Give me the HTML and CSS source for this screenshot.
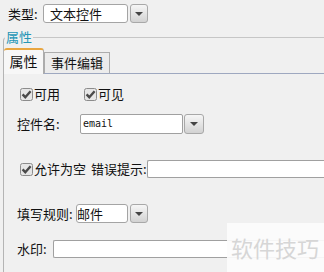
FILE: index.html
```html
<!DOCTYPE html>
<html>
<head>
<meta charset="UTF-8">
<title>控件属性</title>
<link rel="stylesheet" href="styles.css">
</head>
<body>

<div class="type-row">
    <span class="label type-label">类型:</span>
    <div class="combo-box type-combo">文本控件</div>
    <div class="combo-btn"><span class="arrow"></span></div>
</div>

<fieldset class="group">
    <legend>属性</legend>
    <div class="tabs">
        <div class="tab tab-active">属性</div>
        <div class="tab">事件编辑</div>
    </div>
    <div class="panel">
        <div class="row check-row">
            <label class="check check-first">
                <svg width="13" height="13" viewBox="0 0 13 13"><rect x="0.5" y="0.5" width="12" height="12" rx="2" fill="#e6e6e6" stroke="#8c8c8c"/><path d="M2.6 6.4 L5.3 9.2 L10.6 3.2" fill="none" stroke="#4a4a4a" stroke-width="2.4"/></svg>
                可用
            </label>
            <label class="check">
                <svg width="13" height="13" viewBox="0 0 13 13"><rect x="0.5" y="0.5" width="12" height="12" rx="2" fill="#e6e6e6" stroke="#8c8c8c"/><path d="M2.6 6.4 L5.3 9.2 L10.6 3.2" fill="none" stroke="#4a4a4a" stroke-width="2.4"/></svg>
                可见
            </label>
        </div>

        <div class="row name-row">
            <span class="label name-label">控件名:</span>
            <div class="input name-input">email</div>
            <div class="combo-btn name-btn"><span class="arrow"></span></div>
        </div>

        <div class="row allow-row">
            <label class="check">
                <svg width="13" height="13" viewBox="0 0 13 13"><rect x="0.5" y="0.5" width="12" height="12" rx="2" fill="#e6e6e6" stroke="#8c8c8c"/><path d="M2.6 6.4 L5.3 9.2 L10.6 3.2" fill="none" stroke="#4a4a4a" stroke-width="2.4"/></svg>
                允许为空
            </label>
            <span class="label error-label">错误提示:</span>
            <div class="input wide-input"></div>
        </div>

        <div class="row rule-row">
            <span class="label rule-label">填写规则:</span>
            <div class="combo-box rule-combo">邮件</div>
            <div class="combo-btn"><span class="arrow"></span></div>
        </div>

        <div class="row mark-row">
            <span class="label mark-label">水印:</span>
            <div class="input wide-input"></div>
        </div>
    </div>
</fieldset>

<div class="watermark">软件技巧</div>

</body>
</html>
```

FILE: styles.css
```css
body, html {
    margin: 0;
    padding: 0;
    width: 324px;
    height: 272px;
    overflow: hidden;
    background-color: #f0f0f0;
    font-family: "Noto Sans CJK SC", "Noto Sans", sans-serif;
    font-size: 13px;
    color: #111;
}

body {
    position: relative;
}

.label {
    white-space: nowrap;
    line-height: 16px;
}

.type-row {
    display: flex;
    align-items: center;
    margin-top: 4px;
    padding-left: 8px;
    height: 19px;
}

.type-label {
    width: 35px;
}

.combo-box {
    box-sizing: border-box;
    height: 19px;
    background-color: #fff;
    border: 1px solid #a4a4a4;
    border-radius: 3px;
    line-height: 17px;
    white-space: nowrap;
}

.type-combo {
    width: 85px;
    padding-left: 6px;
}

.combo-btn {
    box-sizing: border-box;
    width: 18px;
    height: 19px;
    margin-left: 2px;
    border: 1px solid #a8a8a8;
    border-radius: 3px;
    background: linear-gradient(#f6f6f6, #d2d2d2);
    display: flex;
    justify-content: center;
    align-items: center;
}

.arrow {
    width: 0;
    height: 0;
    border-left: 4px solid transparent;
    border-right: 4px solid transparent;
    border-top: 4px solid #444;
}

.group {
    margin: 7px 0 0 3px;
    padding: 0;
    border: 0;
    border-top: 1px solid #c6c6c6;
    border-left: 1px solid #b4b4b4;
    border-top-left-radius: 4px;
    min-width: 0;
}

.group legend {
    padding: 0 1px;
    margin-left: 1px;
    color: #2596b6;
    line-height: 14px;
}

.tabs {
    display: flex;
    align-items: flex-end;
    margin-top: 4px;
    height: 25px;
}

.tab {
    box-sizing: border-box;
    height: 21px;
    padding: 0 6px;
    border: 1px solid #acacac;
    border-bottom: none;
    background-color: #ececec;
    line-height: 20px;
}

.tab-active {
    height: 26px;
    width: 40px;
    margin-bottom: -1px;
    border-left: none;
    border-top: 2px solid #e9a640;
    border-radius: 3px 3px 0 0;
    background-color: #f7f7f7;
    text-align: center;
    padding: 0;
    line-height: 22px;
    font-size: 14px;
    position: relative;
}

.panel {
    border-top: 1px solid #9ea8c0;
    padding-left: 13px;
    height: 198px;
}

.row {
    display: flex;
    align-items: center;
}

.check {
    display: flex;
    align-items: center;
    gap: 1px;
    line-height: 16px;
    white-space: nowrap;
}

.check-row {
    margin-top: 13px;
    height: 14px;
    padding-left: 3px;
}

.check-first {
    width: 64px;
}

.name-row {
    margin-top: 13px;
    height: 20px;
}

.name-label {
    width: 63px;
}

.input {
    box-sizing: border-box;
    background-color: #fff;
    border: 1px solid #a0a0a0;
    border-radius: 2px;
    white-space: nowrap;
}

.name-input {
    width: 103px;
    height: 20px;
    padding-left: 2px;
    font-family: "DejaVu Sans Mono", monospace;
    font-size: 10px;
    line-height: 18px;
}

.name-btn {
    width: 20px;
    height: 20px;
    margin-left: 1px;
}

.allow-row {
    margin-top: 26px;
    height: 18px;
    padding-left: 3px;
}

.error-label {
    margin-left: 5px;
    width: 56px;
}

.wide-input {
    flex: 1;
    height: 18px;
    border-right: none;
    border-radius: 2px 0 0 2px;
}

.rule-row {
    margin-top: 26px;
    height: 19px;
}

.rule-label {
    width: 59px;
}

.rule-combo {
    width: 52px;
    padding-left: 0;
}

.mark-row {
    margin-top: 17px;
    height: 18px;
}

.mark-label {
    width: 36px;
}

.watermark {
    position: absolute;
    left: 227px;
    top: 223px;
    width: 97px;
    height: 49px;
    padding-left: 4px;
    box-sizing: border-box;
    background-color: rgba(252, 252, 252, 0.92);
    color: #d6d6d6;
    font-size: 22px;
    line-height: 49px;
    white-space: nowrap;
}
```
